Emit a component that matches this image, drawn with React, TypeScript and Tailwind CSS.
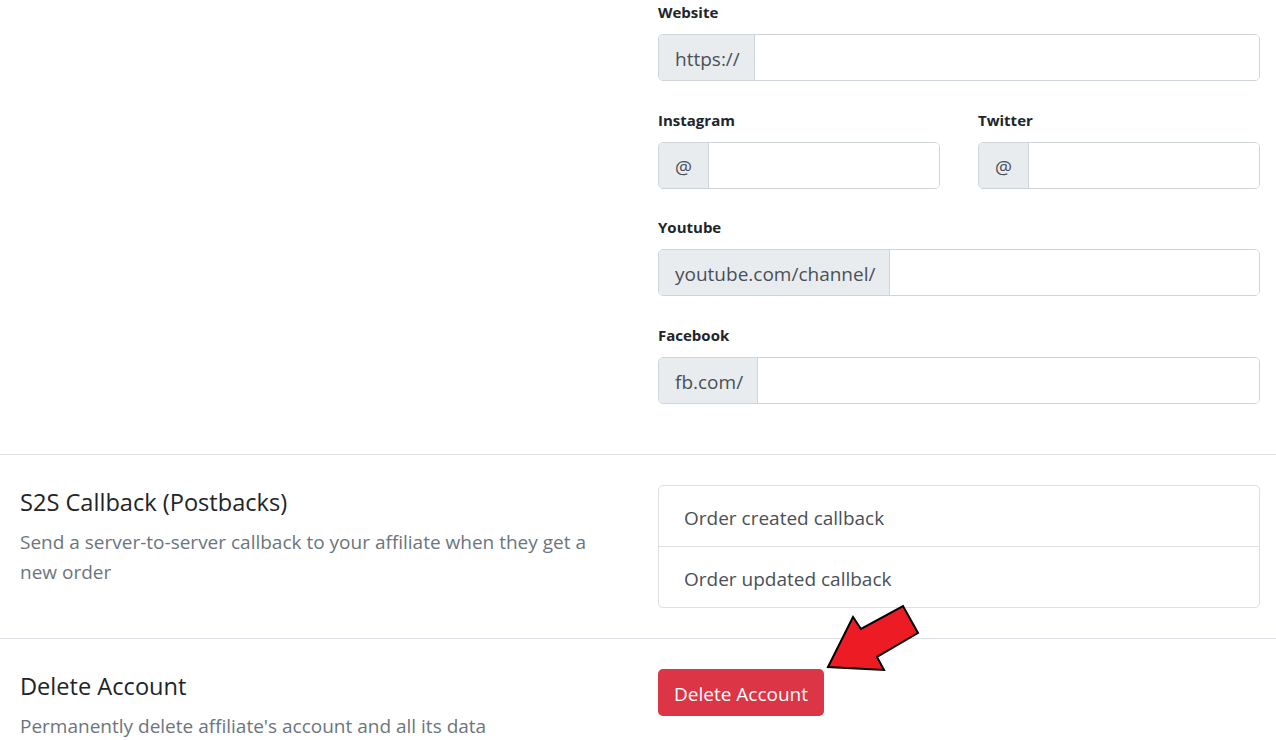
import React from 'react';

const FONT = { fontFamily: '"Open Sans", "Noto Sans", Arial, sans-serif' };

const PrefixInput = ({ prefix, prefixW }: { prefix: string; prefixW: string }) => (
  <div className="flex h-[47px] w-full rounded-[5px] border border-[#ced4da] overflow-hidden">
    <span className={`flex items-center ${prefixW} shrink-0 bg-[#e9ecef] border-r border-[#ced4da] pl-[16px] pt-[3px] text-[19px] text-[#495057] whitespace-nowrap`}>
      {prefix}
    </span>
    <input className="flex-1 min-w-0 bg-white outline-none px-3 text-[19px]" />
  </div>
);

const Field = ({ label, prefix, prefixW, gap }: { label: string; prefix: string; prefixW: string; gap: string }) => (
  <div className={gap}>
    <label className="block text-[15px] leading-[24px] font-bold text-[#212529] mb-[10px]">{label}</label>
    <PrefixInput prefix={prefix} prefixW={prefixW} />
  </div>
);

const SectionText = ({ title, desc }: { title: string; desc: string }) => (
  <div className="pt-[2px]">
    <h5 className="text-[23.6px] leading-[30px] text-[#212529] mb-[10px]">{title}</h5>
    <p className="text-[19px] leading-[30px] text-[#6c757d]">{desc}</p>
  </div>
);

export default function App() {
  return (
    <div className="relative w-[1276px] h-[740px] overflow-hidden bg-white" style={FONT}>
      {/* social links */}
      <div className="grid grid-cols-[602px_602px] gap-x-[36px] pl-[20px] pr-[16px] pb-[50px]">
        <div />
        <div>
          <Field label="Website" prefix="https://" prefixW="w-[96px]" gap="mb-[27px]" />
          <div className="grid grid-cols-2 gap-x-[38px]">
            <Field label="Instagram" prefix="@" prefixW="w-[50px]" gap="mb-[26px]" />
            <Field label="Twitter" prefix="@" prefixW="w-[50px]" gap="mb-[26px]" />
          </div>
          <Field label="Youtube" prefix="youtube.com/channel/" prefixW="w-[231px]" gap="mb-[27px]" />
          <Field label="Facebook" prefix="fb.com/" prefixW="w-[99px]" gap="" />
        </div>
      </div>

      {/* callbacks */}
      <div className="border-t border-[#dee2e6] grid grid-cols-[602px_602px] gap-x-[36px] pl-[20px] pr-[16px] pt-[30px] pb-[30px]">
        <SectionText
          title="S2S Callback (Postbacks)"
          desc="Send a server-to-server callback to your affiliate when they get a new order"
        />
        <div className="self-start rounded-[5px] border border-[#dfdfdf] text-[19px] leading-[30px] text-[#495057]">
          <div className="px-[25px] pt-[17px] pb-[13px] border-b border-[#dfdfdf]">Order created callback</div>
          <div className="px-[25px] pt-[17px] pb-[13px]">Order updated callback</div>
        </div>
      </div>

      {/* delete */}
      <div className="border-t border-[#dee2e6] grid grid-cols-[602px_602px] gap-x-[36px] pl-[20px] pr-[16px] pt-[30px] pb-[30px]">
        <SectionText title="Delete Account" desc="Permanently delete affiliate's account and all its data" />
        <div>
          <button className="h-[47px] px-[16px] pt-[3px] rounded-[5px] bg-[#dc3545] text-white text-[19px]">Delete Account</button>
        </div>
      </div>

      <svg className="absolute left-[780px] top-[595px]" width="150" height="90" viewBox="0 0 150 90">
        <polygon
          points="48,72 73,22 81,34 123,11 138,38 97,62 104,75"
          fill="#ed1c24"
          stroke="#000"
          strokeWidth="2"
          strokeLinejoin="miter"
        />
      </svg>
    </div>
  );
}
